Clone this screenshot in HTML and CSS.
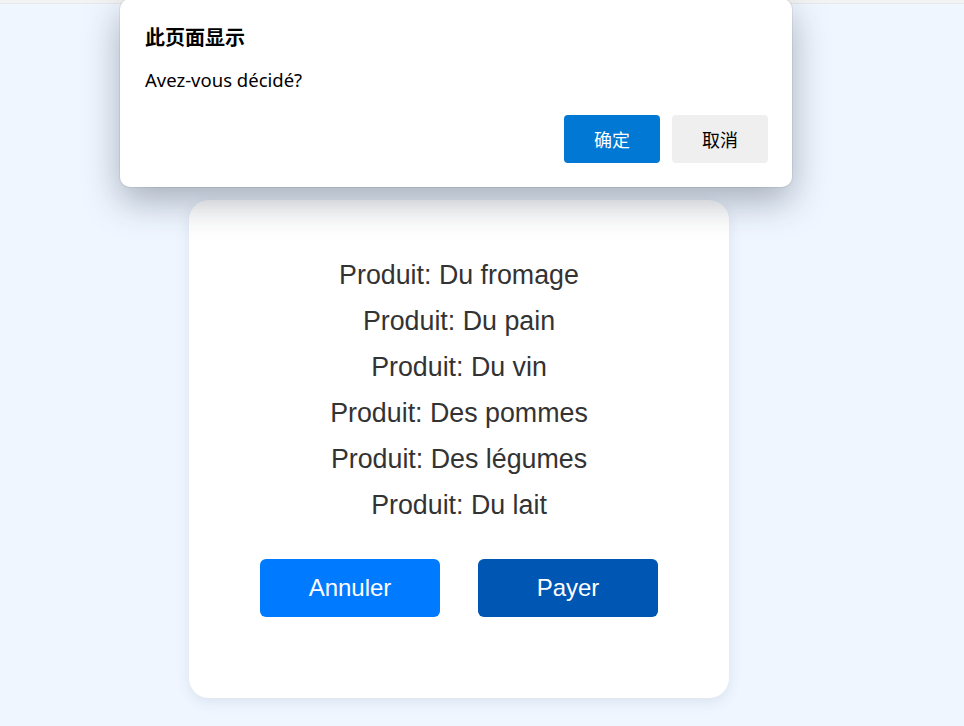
FILE: index.html
```html
<!DOCTYPE html>
<html lang="fr">
<head>
<meta charset="utf-8">
<title>Panier</title>
<link rel="stylesheet" href="styles.css">
</head>
<body>
<div class="topbar"></div>
<main class="page">
  <section class="card">
    <div class="list">
      <p>Produit: Du fromage</p>
      <p>Produit: Du pain</p>
      <p>Produit: Du vin</p>
      <p>Produit: Des pommes</p>
      <p>Produit: Des légumes</p>
      <p>Produit: Du lait</p>
    </div>
    <div class="actions">
      <button class="btn btn-cancel">Annuler</button>
      <button class="btn btn-pay">Payer</button>
    </div>
  </section>
</main>
<div class="dialog" role="dialog">
  <h2 class="dialog-title">此页面显示</h2>
  <p class="dialog-msg">Avez-vous décidé?</p>
  <div class="dialog-actions">
    <button class="dbtn dbtn-ok">确定</button>
    <button class="dbtn dbtn-cancel">取消</button>
  </div>
</div>
</body>
</html>
```
FILE: styles.css
```css
html, body {
  margin: 0;
  padding: 0;
}
body {
  background: #eff6ff;
  font-family: "Liberation Sans", Arial, sans-serif;
  height: 726px;
  overflow: hidden;
  position: relative;
}
.topbar {
  height: 3px;
  background: #f3f3f3;
  border-bottom: 1px solid #e6e9ee;
}
.page {
  display: flex;
  justify-content: center;
  padding-top: 196px;
  padding-right: 46px;
}
.card {
  width: 540px;
  height: 498px;
  box-sizing: border-box;
  background: #fff;
  border-radius: 20px;
  box-shadow: 0 4px 14px rgba(40, 60, 100, 0.10);
  padding-top: 52px;
  display: flex;
  flex-direction: column;
  align-items: center;
}
.list p {
  margin: 0;
  text-align: center;
  font-size: 26.8px;
  line-height: 46px;
  color: #333;
}
.actions {
  display: flex;
  gap: 38px;
  margin-top: 31px;
}
.btn {
  width: 180px;
  height: 58px;
  border: none;
  border-radius: 6px;
  color: #fff;
  font-family: "Liberation Sans", Arial, sans-serif;
  font-size: 24px;
}
.btn-cancel { background: #007bff; }
.btn-pay { background: #0056b3; }

.dialog {
  position: absolute;
  left: 120px;
  top: -1px;
  width: 672px;
  height: 188px;
  box-sizing: border-box;
  background: #fff;
  border-radius: 10px;
  box-shadow: 0 0 0 1px rgba(0, 0, 0, 0.06), 0 14px 36px rgba(30, 40, 60, 0.35);
  padding: 24px 24px 0 25px;
  font-family: "Noto Sans", "Noto Sans CJK SC", sans-serif;
  color: #000;
}
.dialog-title {
  margin: 0;
  font-family: "Noto Sans CJK SC", sans-serif;
  font-size: 20px;
  font-weight: 700;
  line-height: 28px;
}
.dialog-msg {
  margin: 17px 0 0;
  font-size: 18.5px;
  line-height: 24px;
}
.dialog-actions {
  display: flex;
  justify-content: flex-end;
  gap: 12px;
  margin-top: 23px;
}
.dbtn {
  width: 96px;
  height: 48px;
  border: none;
  border-radius: 4px;
  font-family: "Noto Sans CJK SC", sans-serif;
  font-size: 18px;
}
.dbtn-ok {
  background: #0078d4;
  color: #fff;
}
.dbtn-cancel {
  background: #efefef;
  color: #000;
}
```
